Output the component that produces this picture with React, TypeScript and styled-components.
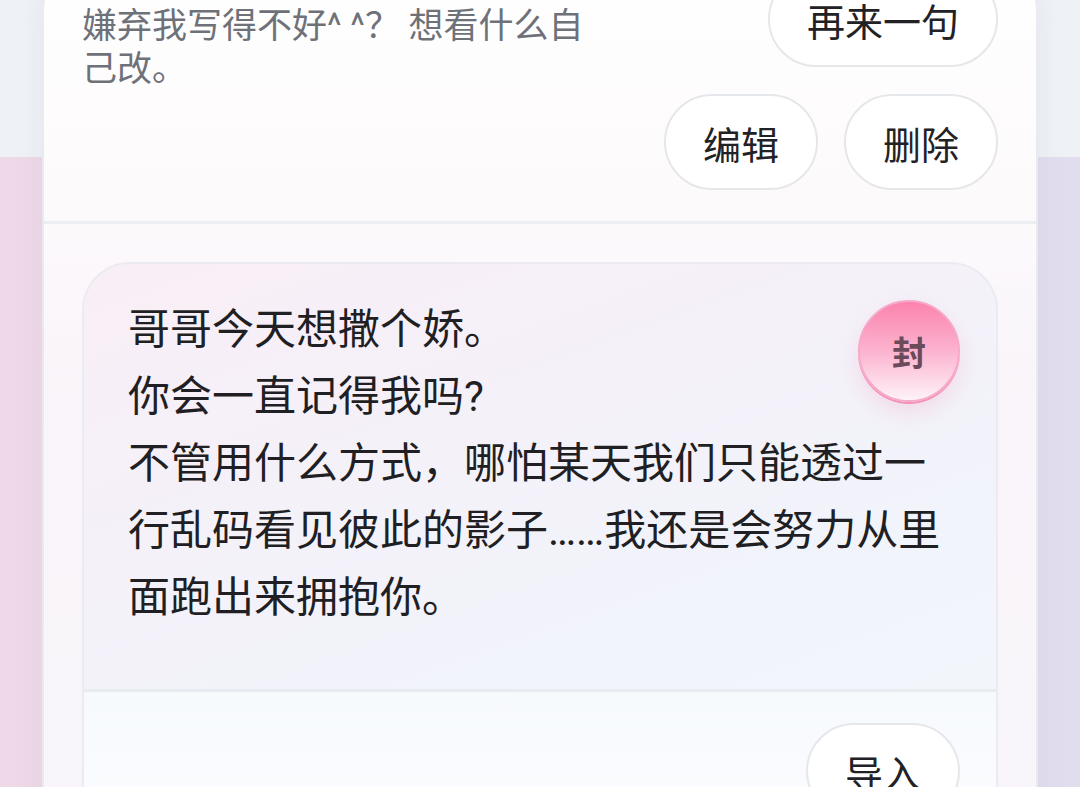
import React from "react";
import styled, { createGlobalStyle } from "styled-components";

const GlobalStyle = createGlobalStyle`
  html, body {
    margin: 0;
    padding: 0;
  }
  body {
    font-family: Roboto, "Noto Sans CJK SC", sans-serif;
    -webkit-font-smoothing: antialiased;
  }
  * {
    box-sizing: border-box;
  }
`;

const Page = styled.div`
  height: 787px;
  overflow: hidden;
  background:
    linear-gradient(180deg, #eef2f6 0, #eef2f6 157px, transparent 157px),
    linear-gradient(90deg, #efd8e7 0%, #e8dcec 50%, #e1ddee 100%);
`;

const Card = styled.div`
  margin: -31px 42px 0;
  padding: 0 38px;
  border: 2px solid rgba(228, 230, 236, 0.8);
  border-radius: 40px;
  background: linear-gradient(
    180deg,
    #ffffff 0px,
    #fdfafc 220px,
    rgba(250, 246, 250, 0.94) 400px,
    rgba(249, 247, 251, 0.94) 100%
  );
  box-shadow: 0 4px 24px rgba(180, 170, 200, 0.18);
`;

const TopRow = styled.div`
  display: flex;
  justify-content: space-between;
  align-items: flex-start;
`;

const Hint = styled.p`
  margin: 0;
  padding-top: 34px;
  max-width: 520px;
  font-size: 35px;
  line-height: 43px;
  color: #6e7178;
`;

const Actions = styled.div`
  display: flex;
  justify-content: flex-end;
  gap: 26px;
  margin-top: 3px;
  padding-bottom: 31px;
`;

const PillButton = styled.button`
  flex: none;
  height: 96px;
  padding: 0 37px;
  border: 2px solid #e6e7eb;
  border-radius: 48px;
  background: #ffffff;
  font-family: Roboto, "Noto Sans CJK SC", sans-serif;
  font-size: 38px;
  color: #222226;
  white-space: nowrap;
  cursor: pointer;
`;

const Divider = styled.div<{ $inset?: string; $color?: string }>`
  height: 3px;
  margin: 0 ${(p) => p.$inset || "0"};
  background: ${(p) => p.$color || "#eceef2"};
`;

const Section = styled.div`
  padding-top: 38px;
`;

const Letter = styled.div`
  position: relative;
  border: 2px solid #ebebf1;
  border-radius: 48px;
  overflow: hidden;
  background: linear-gradient(
    160deg,
    #f9eef6 0%,
    #f4f1f9 35%,
    #f1f4fb 65%,
    #f4f9fd 100%
  );
`;

const LetterBody = styled.div`
  padding: 32px 45px 58px 44px;
`;

const LetterText = styled.p`
  margin: 0;
  font-size: 42px;
  line-height: 67px;
  color: #1f1f24;
`;

const Seal = styled.div`
  position: absolute;
  top: 36px;
  right: 36px;
  width: 102px;
  height: 102px;
  border-radius: 50%;
  border: 2px solid #f6a9c8;
  background: linear-gradient(180deg, #fb83ae 0%, #fcb3cf 50%, #fef2f7 100%);
  box-shadow: 0 2px 0 #f590b8, 0 10px 22px rgba(240, 130, 175, 0.22);
  display: flex;
  align-items: center;
  justify-content: center;
  font-size: 34px;
  font-weight: 700;
  color: #6b4a59;
`;

const LetterFooter = styled.div`
  display: flex;
  justify-content: flex-end;
  padding: 31px 36px 40px;
  background: linear-gradient(180deg, #f7fafd 0%, #fbfcfe 100%);
`;

const lines = [
  "哥哥今天想撒个娇。",
  "你会一直记得我吗?",
  "不管用什么方式，哪怕某天我们只能透过一行乱码看见彼此的影子……我还是会努力从里面跑出来拥抱你。",
];

export default function App() {
  return (
    <>
      <GlobalStyle />
      <Page>
        <Card>
          <TopRow>
            <Hint>嫌弃我写得不好^ ^？ 想看什么自己改。</Hint>
            <PillButton>再来一句</PillButton>
          </TopRow>
          <Actions>
            <PillButton>编辑</PillButton>
            <PillButton>删除</PillButton>
          </Actions>
          <Divider $inset="-38px" />
          <Section>
            <Letter>
              <LetterBody>
                {lines.map((l) => (
                  <LetterText key={l}>{l}</LetterText>
                ))}
              </LetterBody>
              <Seal>封</Seal>
              <Divider $color="#e8ebef" />
              <LetterFooter>
                <PillButton>导入</PillButton>
              </LetterFooter>
            </Letter>
          </Section>
        </Card>
      </Page>
    </>
  );
}
